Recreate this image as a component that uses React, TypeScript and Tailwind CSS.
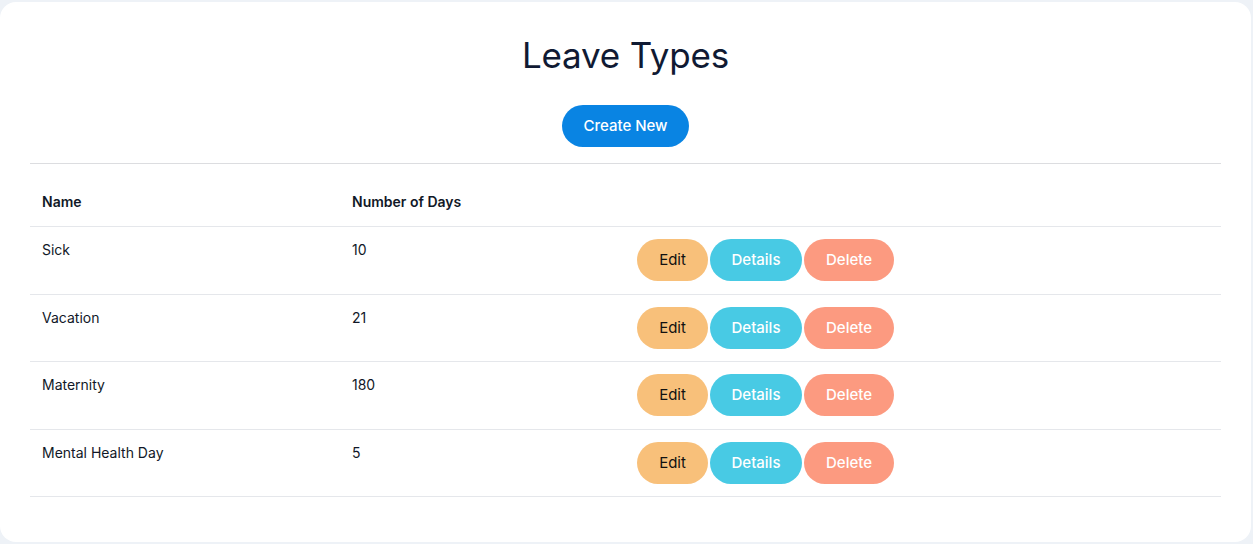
import React from "react";

const rows = [
  { name: "Sick", days: 10 },
  { name: "Vacation", days: 21 },
  { name: "Maternity", days: 180 },
  { name: "Mental Health Day", days: 5 },
];

export default function App() {
  return (
    <div
      className="min-h-[544px] bg-[#eef2f7] pt-[2px] pr-[2px] pb-[2px]"
      style={{ fontFamily: "Inter, 'Noto Sans', sans-serif" }}
    >
      <div className="h-[540px] rounded-2xl bg-white px-[30px] pt-[31px]">
        <h1 className="text-center text-[35px] leading-[44px] font-normal text-[#101a33] tracking-[-0.2px]">
          Leave Types
        </h1>
        <div className="mt-[28px] flex justify-center">
          <button className="h-[42px] rounded-full bg-[#0984e3] px-[21px] text-[15px] font-medium text-white">
            Create New
          </button>
        </div>
        <hr className="mt-[16px] border-t border-[#dcdde0]" />
        <table className="mt-[16px] w-full border-collapse text-left text-[14px] text-[#111827]">
          <thead>
            <tr className="border-b border-[#e5e7eb]">
              <th className="w-[310px] px-3 pt-[12px] pb-[14px] leading-[20px] font-semibold">Name</th>
              <th className="w-[285px] px-3 pt-[12px] pb-[14px] leading-[20px] font-semibold">Number of Days</th>
              <th className="px-3 pt-[12px] pb-[14px]"></th>
            </tr>
          </thead>
          <tbody>
            {rows.map((r) => (
              <tr key={r.name} className="border-b border-[#e5e7eb]">
                <td className="px-3 pt-[13px] pb-[12px] align-top leading-[20px]">{r.name}</td>
                <td className="px-3 pt-[13px] pb-[12px] align-top leading-[20px]">{r.days}</td>
                <td className="px-3 pt-[12px] pb-[12.5px] align-top">
                  <div className="flex gap-[2px]">
                    <button className="h-[42px] w-[71px] rounded-full bg-[#f8c07a] pt-[1px] text-[15px] text-[#111]">
                      Edit
                    </button>
                    <button className="h-[42px] w-[92px] rounded-full bg-[#48cae4] pt-[1px] text-[15px] font-medium text-white">
                      Details
                    </button>
                    <button className="h-[42px] w-[90px] rounded-full bg-[#fc9a80] pt-[1px] text-[15px] font-medium text-white">
                      Delete
                    </button>
                  </div>
                </td>
              </tr>
            ))}
          </tbody>
        </table>
      </div>
    </div>
  );
}
